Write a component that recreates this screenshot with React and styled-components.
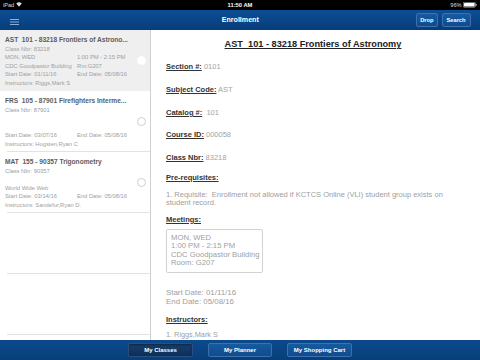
import React from 'react';
import styled, { createGlobalStyle } from 'styled-components';

const Global = createGlobalStyle`
  html, body { margin: 0; padding: 0; background: #fff; }
  body { font-family: "Liberation Sans", Arial, Helvetica, sans-serif; }
  * { box-sizing: border-box; }
`;

const Screen = styled.div`
  width: 480px;
  height: 360px;
  display: flex;
  flex-direction: column;
  overflow: hidden;
  background: #fff;
`;

const StatusBar = styled.div`
  flex: none;
  height: 9.5px;
  background: #000;
  color: #fff;
  display: grid;
  grid-template-columns: 1fr auto 1fr;
  align-items: center;
  padding: 0 3px;
  font-size: 5.6px;
`;

const StatusLeft = styled.div`
  display: flex;
  align-items: center;
  gap: 2px;
  color: #ddd;
`;

const StatusTime = styled.div`
  font-weight: 700;
  font-size: 5.8px;
`;

const StatusRight = styled.div`
  display: flex;
  align-items: center;
  justify-content: flex-end;
  gap: 1.5px;
  color: #ddd;
`;

const Header = styled.div`
  flex: none;
  height: 20.5px;
  background: linear-gradient(#0c4e95, #073d7b);
  display: grid;
  grid-template-columns: 1fr auto 1fr;
  align-items: center;
  padding: 0 9.5px 0 10px;
`;

const HeaderTitle = styled.div`
  color: #fff;
  font-weight: 700;
  font-size: 7.1px;
`;

const HeaderActions = styled.div`
  display: flex;
  justify-content: flex-end;
  gap: 3.5px;
`;

const NavButton = styled.div`
  height: 13.5px;
  padding: 0 ${p => p.$pad}px;
  display: flex;
  align-items: center;
  border: 1px solid #3f70ab;
  border-radius: 2px;
  background: linear-gradient(#175a9f, #0f4c8e);
  color: #fff;
  font-weight: 700;
  font-size: 5.7px;
`;

const Main = styled.div`
  flex: 1;
  min-height: 0;
  display: flex;
`;

const ListPanel = styled.div`
  flex: none;
  width: 151px;
  border-right: 1px solid #cfcfcf;
  overflow: hidden;
  background: #fff;
`;

const Row = styled.div`
  position: relative;
  height: 61px;
  display: flex;
  padding: 6px 0 0 5px;
  background: ${p => (p.$selected ? '#efefef' : '#fff')};
  &::after {
    content: '';
    position: absolute;
    left: 7px;
    right: 0;
    bottom: 0;
    height: 1px;
    background: ${p => (p.$selected ? 'transparent' : '#e2e2e2')};
  }
`;

const RowBody = styled.div`
  flex: 1;
  min-width: 0;
`;

const RowTitle = styled.div`
  font-size: 6.6px;
  font-weight: 700;
  color: #5c5c5c;
  line-height: 8.75px;
  white-space: pre;
`;

const RowLines = styled.div`
  display: grid;
  grid-template-columns: 72px 1fr;
  grid-auto-rows: 8.5px;
  font-size: 5.8px;
  line-height: 8.5px;
  color: #a0a0a0;
  white-space: nowrap;
`;

const Cell = styled.div`
  grid-column: ${p => (p.$wide ? 'span 2' : 'auto')};
`;

const Radio = styled.div`
  flex: none;
  align-self: center;
  width: 9px;
  height: 9px;
  margin: 0 4.5px 6px 0;
  border-radius: 50%;
  background: #fff;
  border: 0.6px solid ${p => (p.$selected ? '#fff' : '#cfcfcf')};
`;

const DetailPanel = styled.div`
  flex: 1;
  min-width: 0;
  overflow: hidden;
  padding: 9.3px 20px 0 15px;
  background: #fff;
`;

const DetailTitle = styled.div`
  text-align: center;
  font-size: 9.2px;
  font-weight: 700;
  line-height: 10px;
  color: #222;
  text-decoration: underline;
  white-space: pre;
`;

const Field = styled.div`
  margin-top: ${p => p.$mt}px;
  font-size: 7.5px;
  line-height: 10px;
  white-space: pre;
`;

const Label = styled.span`
  font-weight: 700;
  color: #333;
  text-decoration: underline;
`;

const Value = styled.span`
  color: #a3a3a3;
  font-size: 7.5px;
`;

const Paragraph = styled.div`
  margin-top: ${p => p.$mt}px;
  font-size: ${p => p.$fs}px;
  line-height: ${p => p.$lh}px;
  color: #a0a0a0;
`;

const MeetingBox = styled.div`
  margin-top: 4.6px;
  width: 96.5px;
  border: 1px solid #d2d2d2;
  border-radius: 2px;
  padding: 3.5px 0 4px 4px;
  font-size: 7.7px;
  line-height: 8.6px;
  color: #a0a0a0;
  white-space: nowrap;
`;

const BottomBar = styled.div`
  flex: none;
  height: 20.5px;
  background: linear-gradient(#0c4a8d, #083e79);
  display: flex;
  align-items: center;
  justify-content: center;
  gap: 15px;
`;

const TabButton = styled.div`
  width: 64.5px;
  height: 13.5px;
  display: flex;
  align-items: center;
  justify-content: center;
  border-radius: 2px;
  border: 1px solid ${p => (p.$active ? '#2a4f7e' : '#3f70ab')};
  background: ${p =>
    p.$active
      ? 'linear-gradient(#183f6c, #0c2f57)'
      : 'linear-gradient(#175a9f, #0f4c8e)'};
  box-shadow: ${p => (p.$active ? 'inset 0 1px 2px rgba(0,0,0,0.4)' : 'none')};
  color: #fff;
  font-weight: 700;
  font-size: 6px;
`;

const Hamburger = () => (
  <svg width="9" height="6" viewBox="0 0 9 6">
    <g stroke="#9dbbe0" strokeWidth="0.9">
      <line x1="0" y1="0.5" x2="9" y2="0.5" />
      <line x1="0" y1="3" x2="9" y2="3" />
      <line x1="0" y1="5.5" x2="9" y2="5.5" />
    </g>
  </svg>
);

const Wifi = () => (
  <svg width="6" height="5" viewBox="0 0 12 10">
    <path d="M6 9.5 L0.5 3.2 A8 8 0 0 1 11.5 3.2 Z" fill="#ddd" />
  </svg>
);

const Battery = () => (
  <svg width="14" height="5.5" viewBox="0 0 14 5.5">
    <rect x="0.3" y="0.3" width="12" height="4.9" rx="0.8" fill="none" stroke="#ddd" strokeWidth="0.6" />
    <rect x="1" y="1" width="10.6" height="3.5" rx="0.4" fill="#fff" />
    <rect x="12.6" y="1.8" width="1" height="1.9" fill="#ddd" />
  </svg>
);

const items = [
  {
    title: 'AST  101 - 83218 Frontiers of Astrono...',
    selected: true,
    lines: [
      ['Class Nbr: 83218'],
      ['MON, WED', '1:00 PM - 2:15 PM'],
      ['CDC Goodpastor Building', 'Rm:G207'],
      ['Start Date: 01/11/16', 'End Date: 05/08/16'],
      ['Instructors: Riggs,Mark S'],
    ],
  },
  {
    title: 'FRS  105 - 87901 Firefighters Interme...',
    lines: [
      ['Class Nbr: 87901'],
      [''],
      [''],
      ['Start Date: 03/07/16', 'End Date: 05/08/16'],
      ['Instructors: Hogsten,Ryan C'],
    ],
  },
  {
    title: 'MAT  155 - 90357 Trigonometry',
    lines: [
      ['Class Nbr: 90357'],
      [''],
      ['World Wide Web'],
      ['Start Date: 03/14/16', 'End Date: 05/08/16'],
      ['Instructors: Sandefur,Ryan D.'],
    ],
  },
];

const fields = [
  ['Section #:', '0101'],
  ['Subject Code:', 'AST'],
  ['Catalog #:', ' 101'],
  ['Course ID:', '000058'],
  ['Class Nbr:', '83218'],
];

export default function App() {
  return (
    <Screen>
      <Global />
      <StatusBar>
        <StatusLeft>
          <span>iPad</span>
          <Wifi />
        </StatusLeft>
        <StatusTime>11:50 AM</StatusTime>
        <StatusRight>
          <span>96%</span>
          <Battery />
        </StatusRight>
      </StatusBar>
      <Header>
        <div>
          <Hamburger />
        </div>
        <HeaderTitle>Enrollment</HeaderTitle>
        <HeaderActions>
          <NavButton $pad={3.5}>Drop</NavButton>
          <NavButton $pad={4}>Search</NavButton>
        </HeaderActions>
      </Header>
      <Main>
        <ListPanel>
          {items.map((it, i) => (
            <Row key={i} $selected={it.selected}>
              <RowBody>
                <RowTitle>{it.title}</RowTitle>
                <RowLines>
                  {it.lines.map((ln, j) =>
                    ln.length === 1 ? (
                      <Cell key={j} $wide>{ln[0] || '\u00a0'}</Cell>
                    ) : (
                      <React.Fragment key={j}>
                        <Cell>{ln[0]}</Cell>
                        <Cell>{ln[1]}</Cell>
                      </React.Fragment>
                    )
                  )}
                </RowLines>
              </RowBody>
              <Radio $selected={it.selected} />
            </Row>
          ))}
          <Row />
          <Row />
        </ListPanel>
        <DetailPanel>
          <DetailTitle>AST  101 - 83218 Frontiers of Astronomy</DetailTitle>
          {fields.map(([l, v], i) => (
            <Field key={l} $mt={i === 0 ? 13 : 12.7}>
              <Label>{l}</Label>
              <Value> {v}</Value>
            </Field>
          ))}
          <Field $mt={10}>
            <Label>Pre-requisites:</Label>
          </Field>
          <Paragraph $mt={7.5} $fs={7.5} $lh={8.6}>
            1. Requisite:&nbsp; Enrollment not allowed if KCTCS Online (VLI) student group exists on student record.
          </Paragraph>
          <Field $mt={6.8}>
            <Label>Meetings:</Label>
          </Field>
          <MeetingBox>
            <div>MON, WED</div>
            <div>1:00 PM - 2:15 PM</div>
            <div>CDC Goodpastor Building</div>
            <div>Room: G207</div>
          </MeetingBox>
          <Paragraph $mt={15} $fs={7.9} $lh={9}>
            <div>Start Date: 01/11/16</div>
            <div>End Date: 05/08/16</div>
          </Paragraph>
          <Field $mt={9.2}>
            <Label>Instructors:</Label>
          </Field>
          <Paragraph $mt={4.8} $fs={7.3} $lh={10}>
            1. Riggs,Mark S
          </Paragraph>
        </DetailPanel>
      </Main>
      <BottomBar>
        <TabButton $active>My Classes</TabButton>
        <TabButton>My Planner</TabButton>
        <TabButton>My Shopping Cart</TabButton>
      </BottomBar>
    </Screen>
  );
}
